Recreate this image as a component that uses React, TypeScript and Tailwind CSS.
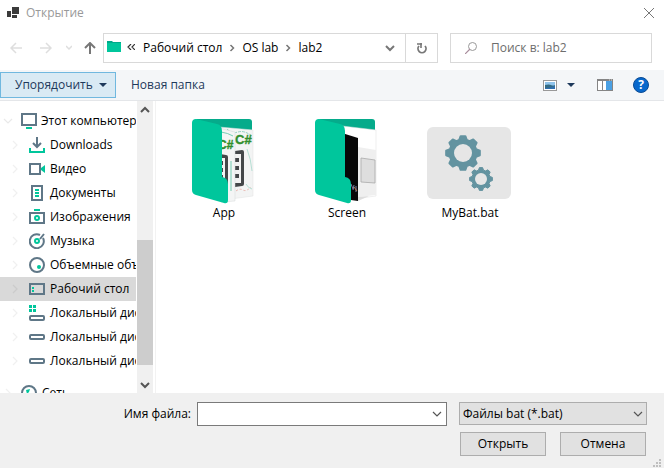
import React from "react";

const SLATE = "#5f7787";
const MINT = "#00c69c";

type IconName =
  | "computer" | "downloads" | "video" | "documents" | "pictures"
  | "music" | "objects" | "desktop" | "system" | "disk" | "network";

function PlaceIcon({ name }: { name: IconName }) {
  const s = { fill: "none", stroke: SLATE, strokeWidth: 2 };
  const shapes: Record<IconName, React.ReactNode> = {
    computer: (<><rect x="1" y="1" width="14" height="11" {...s} /><rect x="5" y="14" width="6" height="2" fill={MINT} /></>),
    downloads: (<><path d="M8 0v9M4 6l4 4 4-4" {...s} /><path d="M1 11v4h14v-4" fill="none" stroke={MINT} strokeWidth="2" /></>),
    video: (<><rect x="1" y="3" width="10" height="10" {...s} /><path d="M16 4v8l-4-3V7z" fill={MINT} /></>),
    documents: (<><rect x="3" y="1" width="10" height="14" {...s} /><path d="M6 5h4M6 8h4M6 11h4" stroke={MINT} strokeWidth="2" /></>),
    pictures: (<><rect x="1" y="4" width="14" height="10" {...s} /><path d="M5 1h6" stroke={MINT} strokeWidth="2" /><circle cx="8" cy="9" r="2" fill="none" stroke={MINT} strokeWidth="2" /></>),
    music: (<><path d="M14 5a7 7 0 1 1-3-3M11 6l4-5" {...s} /><circle cx="8" cy="8" r="2" fill="none" stroke={MINT} strokeWidth="2" /></>),
    objects: (<><circle cx="8" cy="8" r="7" {...s} /><circle cx="10" cy="10" r="2" fill={MINT} /></>),
    desktop: (<><rect x="1" y="3" width="14" height="10" {...s} /><path d="M3 6h2v2H3zM3 9h2v2H3z" fill={MINT} /></>),
    system: (<><path d="M0 0h3v3H0zM4 0h3v3H4zM0 4h3v3H0zM4 4h3v3H4z" fill={MINT} /><rect x="1" y="11" width="14" height="4" rx="1" {...s} /></>),
    disk: <rect x="1" y="6" width="14" height="4" rx="1" {...s} />,
    network: (<><circle cx="8" cy="8" r="7" {...s} /><path d="M5 5l4-1-1 3-2 2z" fill={MINT} /></>),
  };
  return <svg viewBox="0 0 16 16" className="size-4 shrink-0" aria-hidden="true">{shapes[name]}</svg>;
}

const places: { label: string; icon: IconName; selected?: boolean }[] = [
  { label: "Downloads", icon: "downloads" },
  { label: "Видео", icon: "video" },
  { label: "Документы", icon: "documents" },
  { label: "Изображения", icon: "pictures" },
  { label: "Музыка", icon: "music" },
  { label: "Объемные объекты", icon: "objects" },
  { label: "Рабочий стол", icon: "desktop", selected: true },
  { label: "Локальный диск", icon: "system" },
  { label: "Локальный диск", icon: "disk" },
  { label: "Локальный диск", icon: "disk" },
];

function Chevron({ dir, className = "", weight = 1.2 }: { dir: "up" | "down" | "right"; className?: string; weight?: number }) {
  const d = { up: "M1 7l4-4 4 4", down: "M1 3l4 4 4-4", right: "M3 1l4 4-4 4" }[dir];
  return (
    <svg viewBox="0 0 10 10" className={`size-2.5 shrink-0 ${className}`} aria-hidden="true">
      <path d={d} fill="none" stroke="currentColor" strokeWidth={weight} />
    </svg>
  );
}

function Folder({ content }: { content: "code" | "screen" }) {
  return (
    <svg viewBox="0 0 86 85" className="h-[85px] w-[86px]" aria-hidden="true">
      <path d="M14 0h54q3 0 3 3v9L40 12z" fill="#05ab8b" />
      {content === "code" ? (
        <>
          <path d="M38 8l34 3v66l-30 4z" fill="#f3f4f4" stroke="#e0e2e2" strokeWidth=".5" />
          <path d="M46 10q5 5 11 3t14 4" fill="none" stroke="#79c9b4" strokeWidth=".8" strokeDasharray="3 1" />
          <text x="54" y="25" fontSize="13" fontWeight="700" fill="#318f2c" stroke="#318f2c" strokeWidth=".4" className="font-['Liberation_Sans']">C#</text>
          <path d="M54 32l7-1q2 0 2 2v32q0 2-2 2l-7 1z" fill="#444749" />
          <path d="M54 35h6v29h-6z" fill="#f2f2f2" />
          <path d="M54 39h4v4h-4zM54 47h4v4h-4zM54 55h4v4h-4z" fill="#444749" />
          <path d="M55 72q4-3 7-1t8-3" fill="none" stroke="#e6a39b" strokeWidth=".8" strokeDasharray="2 2" />
          <path d="M66 30q4 10 5 22M65 65q2 4 6 5" fill="none" stroke="#9bd6c6" strokeWidth=".7" />
          <path d="M38 9l16 4v69l-14 1z" fill="#f4f5f5" stroke="#d5d8d8" strokeWidth=".5" />
          <path d="M40 13q7 1 12 4M50 42v30" fill="none" stroke="#65c8ac" strokeWidth=".9" />
          <text x="37" y="30" fontSize="12" fontWeight="700" fill="#318f2c" stroke="#318f2c" strokeWidth=".4" className="font-['Liberation_Sans']">C#</text>
          <path d="M39 35l6 1q2 0 2 2v27h-8z" fill="#444749" />
          <path d="M39 39h5v21h-5z" fill="#f2f2f2" />
          <path d="M39 42h3v4h-3zM39 49h3v4h-3zM39 56h3v4h-3z" fill="#444749" />
        </>
      ) : (
        <>
          <path d="M38 7l34 4v66l-30 4z" fill="#fff" stroke="#dedede" strokeWidth=".5" />
          <path d="M54 28l18 3v45l-18 2z" fill="#efefef" />
          <path d="M57 39l14 2v23l-14-1z" fill="#dedede" stroke="#aaa" strokeWidth=".8" />
          <path d="M38 14l16 5v63l-14-2z" fill="#080808" />
          <path d="M47 65l2 5M50 66l-1 5M52 67v6" stroke="#7881a3" strokeWidth="1" />
          <path d="M50 68l3 4" stroke="#b87553" strokeWidth="1" />
          <path d="M54 78l11-1-11 5z" fill="#ddd" />
        </>
      )}
      <path d="M15 0l21 5q5 1 5 7v46q6 1 6 7v16q0 4-4 3l-28-8q-4-1-4-5V4q0-4 4-4z" fill={MINT} />
    </svg>
  );
}

function gearPath(cx: number, cy: number, outer: number) {
  const root = outer * 0.8;
  const points: string[] = [];
  for (let i = 0; i < 8; i++) {
    for (const [offset, r] of [[-16, root], [-8, outer], [8, outer], [16, root]]) {
      const a = ((i * 45 + offset) * Math.PI) / 180;
      points.push(`${(cx + r * Math.sin(a)).toFixed(2)} ${(cy - r * Math.cos(a)).toFixed(2)}`);
    }
  }
  return `M${points.join("L")}Z`;
}

function Gears() {
  return (
    <svg viewBox="0 0 86 85" className="h-[85px] w-[86px]" aria-hidden="true">
      <rect y="8" width="84" height="72" rx="6" fill="#e6e6e6" />
      <g fill="#6393a0" stroke="#6393a0" strokeLinejoin="round">
        <path d={gearPath(36, 34, 17)} strokeWidth="2" />
        <path d={gearPath(54, 60, 11.5)} />
      </g>
      <circle cx="36" cy="34" r="9" fill="#e6e6e6" />
      <circle cx="54" cy="60" r="6" fill="#e6e6e6" />
    </svg>
  );
}

const files = [
  { name: "App", art: <Folder content="code" /> },
  { name: "Screen", art: <Folder content="screen" /> },
  { name: "MyBat.bat", art: <Gears /> },
];

export default function App() {
  return (
    <div className="relative flex h-screen flex-col overflow-hidden bg-white font-['Open_Sans','Noto_Sans',sans-serif] text-xs text-black">
      <header className="flex h-[25px] shrink-0 items-center pl-[7px] pr-2.5">
        <svg viewBox="0 0 12 12" className="size-3" aria-hidden="true">
          <path d="M5 0h7v7H5zM0 4h4v6H0zM5 8h5v3H5z" fill="#3b3b3b" />
        </svg>
        <h1 className="ml-[7px] flex-1 text-[#999]">Открытие</h1>
        <button aria-label="Закрыть">
          <svg viewBox="0 0 10 10" className="size-2.5" aria-hidden="true"><path d="M0 0l10 10M10 0L0 10" stroke="#777" /></svg>
        </button>
      </header>

      <nav className="flex shrink-0 pb-[7px] pl-2.5 pr-3 pt-2">
        <div className="flex w-[93px] items-center text-[#dedede]">
          <button aria-label="Назад"><svg viewBox="0 0 12 12" className="size-3"><path d="M12 6H1M6 1L1 6l5 5" fill="none" stroke="currentColor" strokeWidth="1.5" /></svg></button>
          <button aria-label="Вперед" className="ml-[18px]"><svg viewBox="0 0 12 12" className="size-3"><path d="M0 6h11M6 1l5 5-5 5" fill="none" stroke="currentColor" strokeWidth="1.5" /></svg></button>
          <button aria-label="Последние расположения" className="ml-3.5"><svg viewBox="0 0 6 6" className="size-1.5"><path d="M0 1l3 3 3-3" fill="none" stroke="currentColor" strokeWidth="1.5" /></svg></button>
          <button aria-label="Вверх" className="ml-3 text-[#777]"><svg viewBox="0 0 12 12" className="size-3"><path d="M6 12V1M1 6l5-5 5 5" fill="none" stroke="currentColor" strokeWidth="2" /></svg></button>
        </div>
        <div className="flex h-[30px] flex-1 items-center border border-[#d9d9d9] pl-[3px]">
          <svg viewBox="0 0 14 12" className="mb-1 h-3 w-3.5" aria-hidden="true"><path d="M0 1h5l1 1h8v10H0z" fill="#00a98a" /><path d="M0 3h14v9H0z" fill={MINT} /></svg>
          <svg viewBox="0 0 8 6" className="mb-0.5 ml-1.5 h-1.5 w-2" aria-hidden="true"><path d="M4 0L1 3l3 3M8 0L5 3l3 3" fill="none" stroke="#333" strokeWidth="1.2" /></svg>
          <button className="ml-2">Рабочий стол</button>
          <Chevron dir="right" weight={2} className="ml-[5px] scale-75 text-[#777]" />
          <button className="ml-[5px]">OS lab</button>
          <Chevron dir="right" weight={2} className="ml-[5px] scale-75 text-[#777]" />
          <button className="ml-[5px]">lab2</button>
          <button aria-label="Предыдущие расположения" className="ml-auto mr-2.5 text-[#777]"><Chevron dir="down" weight={2} /></button>
          <button aria-label="Обновить" className="flex h-full w-8 items-center justify-center border-l border-[#d9d9d9] text-[#777]">
            <svg viewBox="0 0 12 12" className="size-3"><path d="M3 4a4 4 0 1 0 6 0" fill="none" stroke="currentColor" strokeWidth="1.8" /><path d="M1 2h5M5 1v5" fill="none" stroke="currentColor" strokeWidth="1.6" /></svg>
          </button>
        </div>
        <label className="ml-3 flex w-[202px] items-center gap-3.5 border border-[#d9d9d9] pl-3.5">
          <svg viewBox="0 0 12 12" className="size-3 shrink-0" aria-hidden="true"><circle cx="7.5" cy="4.5" r="4" fill="none" stroke="#999" /><path d="M5 7l-5 5" stroke="#a88c9c" strokeWidth="1.2" /></svg>
          <input aria-label="Поиск" placeholder="Поиск в: lab2" className="min-w-0 flex-1 outline-none placeholder:text-[#6d6d6d]" />
        </label>
      </nav>

      <div className="flex h-[31px] shrink-0 items-center border-b border-[#e4e6e9] bg-[#f4f6f8] pr-[15px] text-[#1e395b]">
        <button className="flex h-[26px] w-[116px] items-center gap-1.5 border border-[#70b8df] bg-[#d9eaf4] pl-3.5">
          Упорядочить
          <svg viewBox="0 0 8 4" className="h-1 w-2" aria-hidden="true"><path d="M0 0h8L4 4z" fill="currentColor" /></svg>
        </button>
        <button className="ml-[15px]">Новая папка</button>
        <button aria-label="Изменить представление" className="ml-auto flex items-center gap-2.5">
          <svg viewBox="0 0 14 11" className="h-[11px] w-3.5" aria-hidden="true"><rect x=".5" y=".5" width="13" height="10" fill="#fff" stroke="#999" /><path d="M2 2h10v7H2z" fill="#8fc4ec" /><path d="M2 5q4-1 6 0t4 0v4H2z" fill="#346b83" /><path d="M2 8q5 0 10-2v3H2z" fill="#2f6fae" /></svg>
          <svg viewBox="0 0 8 4" className="h-1 w-2" aria-hidden="true"><path d="M0 0h8L4 4z" fill="currentColor" /></svg>
        </button>
        <button aria-label="Область просмотра" className="ml-[22px]">
          <svg viewBox="0 0 16 12" className="h-3 w-4" aria-hidden="true"><path d="M0 0h16v12H0z" fill="#858585" /><path d="M1 2h4v9H1zM6 2h3v9H6z" fill="#fff" /><path d="M9 2h6v9H9z" fill="#4ba0e3" /><path d="M12 1h1M14 1h1" stroke="#fff" strokeWidth=".7" /></svg>
        </button>
        <button aria-label="Справка" className="ml-5 flex size-4 items-center justify-center rounded-full border border-[#0a4b94] bg-[#0868cc] text-xs font-bold leading-4 text-white">?</button>
      </div>

      <main className="flex min-h-0 flex-1">
        <aside className="flex w-[156px] shrink-0 overflow-hidden border-r border-[#f2f2f2]">
          <ul className="mr-px min-w-0 flex-1 overflow-hidden whitespace-nowrap pt-2">
            <li className="flex h-6 items-center">
              <Chevron dir="down" className="ml-[3px] text-[#e9e9e9]" />
              <span className="ml-2 flex items-center gap-1"><PlaceIcon name="computer" />Этот компьютер</span>
            </li>
            {places.map((p, i) => (
              <li key={i} className={`flex h-6 items-center ${p.selected ? "bg-[#d9d9d9] text-black" : ""}`}>
                <Chevron dir="right" className={`ml-2.5 ${p.selected ? "text-[#cbcbcb]" : "text-[#f0f0f0]"}`} />
                <span className="ml-[9px] flex items-center gap-[5px]"><PlaceIcon name={p.icon} />{p.label}</span>
              </li>
            ))}
            <li className="mt-2 flex h-6 items-center">
              <Chevron dir="right" className="ml-[3px] text-[#f0f0f0]" />
              <span className="ml-2 flex items-center gap-[5px]"><PlaceIcon name="network" />Сеть</span>
            </li>
          </ul>
          <div className="mr-0.5 flex w-4 shrink-0 flex-col items-center bg-[#f0f0f0] text-[#555]">
            <button aria-label="Прокрутить вверх" className="flex h-[17px] items-center"><Chevron dir="up" weight={2} /></button>
            <div className="flex-[122]" />
            <div className="w-full flex-[124] bg-[#cdcdcd]" />
            <div className="flex-[11]" />
            <button aria-label="Прокрутить вниз" className="flex h-[17px] items-center"><Chevron dir="down" weight={2} /></button>
          </div>
        </aside>
        <ul className="grid flex-1 auto-rows-min grid-cols-[repeat(auto-fill,122px)] gap-x-px pl-[7px] pt-[18px]">
          {files.map((f) => (
            <li key={f.name}>
              <button className="flex w-full flex-col items-center leading-[18px]">{f.art}{f.name}</button>
            </li>
          ))}
        </ul>
      </main>

      <footer className="shrink-0 bg-[#f0f0f0] pb-3 pt-[9px]">
        <div className="flex pr-[17px]">
          <label htmlFor="file-name" className="w-[191px] text-right leading-6">Имя файла:</label>
          <div className="ml-1.5 flex h-6 flex-1 items-center border border-[#7a7a7a] bg-white pr-1">
            <input id="file-name" className="h-full min-w-0 flex-1 px-1 outline-none" />
            <button aria-label="Показать имена файлов" className="text-[#555]"><Chevron dir="down" /></button>
          </div>
          <div className="relative ml-3 flex w-[188px]">
            <select aria-label="Тип файла" className="h-[23px] w-full appearance-none border border-[#adadad] bg-[#e1e1e1] pl-[3px]">
              <option>Файлы bat (*.bat)</option>
            </select>
            <Chevron dir="down" className="pointer-events-none absolute right-1 top-[7px] text-[#555]" />
          </div>
        </div>
        <div className="mt-1.5 flex justify-end gap-3.5 pr-[18px]">
          <button className="h-6 w-[86px] border border-[#adadad] bg-[#e1e1e1]">Открыть</button>
          <button className="h-6 w-[86px] border border-[#adadad] bg-[#e1e1e1]">Отмена</button>
        </div>
      </footer>
      <svg viewBox="0 0 8 8" className="absolute bottom-px right-[3px] size-2" aria-hidden="true">
        <path d="M6 0h2v2H6zM3 3h2v2H3zM6 3h2v2H6zM0 6h2v2H0zM3 6h2v2H3zM6 6h2v2H6z" fill="#bfbfbf" />
      </svg>
    </div>
  );
}
